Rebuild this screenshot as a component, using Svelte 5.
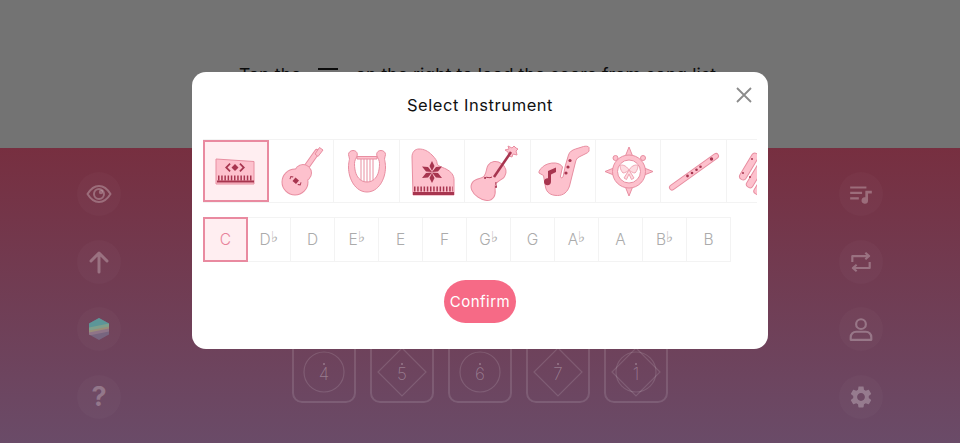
<script>
  const keys = [
    { n: 'C' }, { n: 'D', flat: true }, { n: 'D' }, { n: 'E', flat: true }, { n: 'E' }, { n: 'F' },
    { n: 'G', flat: true }, { n: 'G' }, { n: 'A', flat: true }, { n: 'A' }, { n: 'B', flat: true }, { n: 'B' }
  ];
  const tiles = [
    { d: '4', circle: true },
    { d: '5', diamond: true },
    { d: '6', circle: true },
    { d: '7', diamond: true },
    { d: '1', circle: true, diamond: true }
  ];
  let selectedKey = 0;
</script>

<div class="page">
  <div class="top">
    <p>Tap the
      <svg class="inline-icon" viewBox="0 0 20 14"><path d="M0 1h20v2H0zM0 6h11v2H0zM0 11h8v2H0zM14 5h5v2h-3v5a2 2 0 1 1-2-2z" /></svg>
      on the right to load the score from song list</p>
  </div>

  <div class="bottom">
    <div class="side">
      <div class="round">
        <svg viewBox="0 0 26 26" class="line"><path d="M1.5 13C5 7.3 8.7 5 13 5s8 2.300 11.500 8C21 18.700 17.300 21 13 21S5 18.700 1.500 13z" /><circle cx="13" cy="13" r="5" /><circle cx="15" cy="11" r="1.200" /></svg>
      </div>
      <div class="round">
        <svg viewBox="0 0 26 26" class="line thick"><path d="M13 23V4M5 12l8-8 8 8" /></svg>
      </div>
      <div class="round">
        <svg viewBox="0 0 26 26">
          <defs><clipPath id="hex"><path d="M13 2l10 5.500v11L13 24 3 18.500v-11z" /></clipPath></defs>
          <g clip-path="url(#hex)">
            <rect width="26" height="26" fill="#77657f" />
            <path d="M0 0h26v9L0 14z" fill="#5c9698" />
            <path d="M0 12l26-5v4L0 16z" fill="#7f9f8c" />
            <path d="M0 15l26-5v3L0 18z" fill="#9b8e79" />
            <path d="M0 17l26-5v3L0 20z" fill="#8f7488" />
          </g>
        </svg>
      </div>
      <div class="round"><span class="help">?</span></div>
    </div>

    <div class="tiles">
      {#each tiles as t}
        <div class="tile">
          <svg viewBox="0 0 59 59">
            {#if t.diamond}<path class="shape" d="M30 7l24 24-24 24L6 31z" />{/if}
            {#if t.circle}<circle class="shape" cx="30" cy="31" r="20" />{/if}
            <circle class="dot" cx="30" cy="23" r="1" />
            <text x="30" y="39" text-anchor="middle">{t.d}</text>
          </svg>
        </div>
      {/each}
    </div>

    <div class="side">
      <div class="round">
        <svg viewBox="0 0 24 24" class="solid"><path d="M2 5h15v2H2zM2 10h11v2H2zM2 15h8v2H2zM16 9h6v2.500h-3.500V18a3 3 0 1 1-2.500-3z" /></svg>
      </div>
      <div class="round">
        <svg viewBox="0 0 24 24" class="line"><path d="M4 12V6.500h15M16 3.500L19.500 6.500 16 9.500M20 12v5.500H5M8 14.500L4.500 17.500 8 20.500" /></svg>
      </div>
      <div class="round">
        <svg viewBox="0 0 24 24" class="line"><circle cx="12" cy="7.500" r="4.500" /><path d="M2.500 22v-2.500a5 5 0 0 1 5-5h9a5 5 0 0 1 5 5V22z" /></svg>
      </div>
      <div class="round">
        <svg viewBox="0 0 24 24" class="solid"><path d="M19.140 12.940c.04-.3.06-.61.06-.94 0-.32-.02-.64-.07-.94l2.030-1.580c.18-.14.23-.41.12-.61l-1.920-3.320c-.12-.22-.37-.29-.59-.22l-2.390.96c-.5-.38-1.030-.7-1.620-.94l-.36-2.540c-.04-.24-.24-.41-.48-.41h-3.840c-.24 0-.43.17-.47.41l-.36 2.540c-.59.24-1.130.57-1.620.94l-2.390-.96c-.22-.08-.47 0-.59.22L2.740 8.870c-.12.21-.08.47.12.61l2.030 1.580c-.05.3-.09.63-.09.94s.02.64.07.94l-2.030 1.580c-.18.14-.23.41-.12.61l1.920 3.320c.12.22.37.29.59.22l2.390-.96c.5.38 1.030.7 1.620.94l.36 2.540c.05.24.24.41.48.41h3.840c.24 0 .44-.17.47-.41l.36-2.540c.59-.24 1.130-.56 1.620-.94l2.390.96c.22.08.47 0 .59-.22l1.920-3.320c.12-.22.07-.47-.12-.61l-2.010-1.580zM12 15.600c-1.980 0-3.600-1.620-3.600-3.600s1.620-3.600 3.600-3.600 3.600 1.620 3.600 3.600-1.620 3.600-3.600 3.600z" /></svg>
      </div>
    </div>
  </div>

  <div class="mask">
    <div class="modal">
      <header>
        <h2>Select Instrument</h2>
        <button class="close" aria-label="Close">
          <svg viewBox="0 0 16 16"><path d="M1 1l14 14M15 1L1 15" /></svg>
        </button>
      </header>

      <div class="instruments">
        <!-- keyboard -->
        <div class="inst selected">
          <svg viewBox="0 0 64 64">
            <path class="f" d="M13 20l38 2.500V45H13z" />
            <path class="d" d="M32 25l3.500 3.500-3.500 3.500-3.500-3.500zM26.500 24l1.200 1.200-3.200 3.300 3.200 3.300-1.200 1.200-4.500-4.500zM37.500 24l4.500 4.500-4.500 4.500-1.200-1.200 3.200-3.300-3.200-3.300z" />
            <line class="k" x1="15" y1="39" x2="50" y2="39" />
            <rect class="d" x="14" y="41.500" width="37" height="2" />
          </svg>
        </div>
        <!-- guitar -->
        <div class="inst">
          <svg viewBox="0 0 64 64">
            <path class="tube" d="M36 30L48 13" />
            <path class="tube-in" d="M36 30L48 13" />
            <path class="f" d="M46 15l4.500-6.500 3.500 2.500-5 6.500z" />
            <g class="o"><circle cx="26" cy="43" r="12.500" /><circle cx="34" cy="34" r="8" /></g>
            <g class="i"><circle cx="26" cy="43" r="12.500" /><circle cx="34" cy="34" r="8" /></g>
            <path class="d" d="M26.500 38.500l3.500 3-3 3.500-3.500-3zM21.500 37l3 .5-.5 1-2-.3-.5 2-1-.2zM31.500 46.500l-3-.5.5-1 2 .3.500-2 1 .2z" />
          </svg>
        </div>
        <!-- lyre -->
        <div class="inst">
          <svg viewBox="0 0 64 64">
            <path class="s" d="M27 19v23M30 19v24M33 19v24M36 19v24M39 19v23" />
            <path class="f" d="M19 11.500c3.500 0 5 3 4 5.500-1 3-2.500 4-2.500 7.500 0 8 2 13 5.500 16 2 1.700 4 2.500 7 2.500s5-.8 7-2.500c3.500-3 5.500-8 5.500-16 0-3.500-1.500-4.500-2.500-7.500-1-2.500.5-5.500 4-5.500 2.500 0 4.500 1.800 4.500 4 0 1.500-1 3-1 4.500 0 .5 1 4 1 8 0 12-7 25-18.500 25S14.500 40 14.500 28c0-4 1-7.500 1-8 0-1.500-1-3-1-4.500 0-2.200 2-4 4.500-4z" />
            <path class="f" d="M23 17.500h20v2.500H23z" />
          </svg>
        </div>
        <!-- grand piano -->
        <div class="inst">
          <svg viewBox="0 0 64 64">
            <path class="f" d="M12 18c0-5 3-8 7-8 5 0 9 2 13 6 3.500 3.500 5 6 5 8 0 3 5 4 9 6 5 2.500 8 6 8 11v15H13z" />
            <path class="d" d="M32 22l2.500 5-2.500 5-2.500-5zM32 44l-2.500-5 2.500-5 2.500 5zM22 27.500l6 .5 4 5-6-.5zM42 27.500l-6 .5-4 5 6-.5zM22 39l6-.5 4-5-6 .5zM42 39l-6-.5-4-5 6 .5z" />
            <line class="k" x1="14" y1="50" x2="53" y2="50" />
            <rect class="d" x="13" y="53" width="41" height="3" />
          </svg>
        </div>
        <!-- violin -->
        <div class="inst">
          <svg viewBox="0 0 64 64">
            <path class="f" d="M40 11l4-1-1-3 4 2 2-2 2 2 2 1-2 2 1 4-4-1-1 3-3-1-1-4z" />
            <g transform="translate(25 41) rotate(35)">
              <path class="f" d="M0-20C6-20 10-16 10-11 10-7 7-5 7 0 7 4 13 6 13 12 13 18 7 21 0 21-7 21-13 18-13 12-13 6-7 4-7 0-7-5-10-7-10-11-10-16-6-20 0-20z" />
            </g>
            <path class="st" d="M46 13L29 38" />
            <path class="sd" d="M20 39c2-2 4 1 7-1M31 43c-1 2 1 3 0 5" />
            <circle class="d" cx="20" cy="39" r="1" /><circle class="d" cx="31" cy="48" r="1" />
          </svg>
        </div>
        <!-- saxophone -->
        <div class="inst">
          <svg viewBox="0 0 64 64">
            <path class="f" d="M58 10.500c.5 2-1 3-3 4l-7 3.500c-2 1-3 3-3.500 5l-6 24c-2 6-6 9.500-12 9.500-7 0-11-3-12-8.500l-2-11.500-4.500-2.500c-.5-2 1.500-4 3.500-6 2.500-2.500 8-4.500 13-4 3.500.5 6 2 7 4l-2 9c-.5 2 1 2.500 2.500 1l2.500-12 3-10c1-3.500 4-5 7-6l8-2.500c2-.5 5-.5 5.500 1z" />
            <circle class="d" cx="39" cy="21.500" r="1.600" /><circle class="d" cx="37" cy="28" r="1.600" /><circle class="d" cx="35" cy="34" r="1.600" />
            <path class="d" d="M17 32l8-3.500V33l-5 2.500V42.500a3.500 3.500 0 1 1-3-3.200z" />
          </svg>
        </div>
        <!-- compass -->
        <div class="inst">
          <svg viewBox="0 0 64 64">
            <circle class="f" cx="19.500" cy="19" r="2.500" /><circle class="f" cx="47" cy="19" r="2.500" />
            <path class="f" d="M33 8l4 10h-8zM33 57l4-10h-8zM9 32.500l10-4v8zM57 32.500l-10-4v8z" />
            <circle class="f" cx="33" cy="32.500" r="16.500" />
            <circle class="w" cx="33" cy="32.500" r="11.500" />
            <path class="b" d="M33 31c-3-5-8-6-9-4 0 3 2 6 3 7 2 0 5-2 6-3zM33 31c3-5 8-6 9-4 0 3-2 6-3 7-2 0-5-2-6-3zM33 31l-5 8 2.500 1.500L33 35l2.500 5.500L38 39z" />
          </svg>
        </div>
        <!-- flute -->
        <div class="inst">
          <svg viewBox="0 0 64 64">
            <path class="tube" d="M11 48.500L55 17" />
            <path class="tube-in" d="M11 48.500L55 17" />
            <circle class="d" cx="26.500" cy="37" r="1.400" /><circle class="d" cx="31" cy="34" r="1.300" /><circle class="d" cx="35.500" cy="30.800" r="1.300" /><circle class="d" cx="39.500" cy="27.800" r="1.300" /><circle class="d" cx="50.500" cy="20" r="1.700" />
          </svg>
        </div>
        <!-- xylophone -->
        <div class="inst">
          <svg viewBox="0 0 64 64">
            <rect class="f" x="20" y="36" width="36" height="7" rx="3" transform="rotate(-59 38 39.500)" />
            <rect class="f" x="13" y="30" width="34" height="7" rx="3" transform="rotate(-59 30 33.500)" />
            <rect class="f" x="7" y="24" width="30" height="7" rx="3.500" transform="rotate(-59 22 27.500)" />
            <circle class="d" cx="25" cy="20" r="1" /><circle class="d" cx="16" cy="34" r="1" /><circle class="d" cx="23" cy="38" r="1" /><circle class="d" cx="31" cy="43" r="1" />
          </svg>
        </div>
      </div>

      <div class="keys">
        {#each keys as k, i}
          <div class="key" class:selected={i === selectedKey}>{k.n}{#if k.flat}<span class="flat">♭</span>{/if}</div>
        {/each}
      </div>

      <button class="confirm">Confirm</button>
    </div>
  </div>
</div>

<style>
  :global(body) {
    margin: 0;
    background: #737373;
    font-family: Inter, "Liberation Sans", sans-serif;
  }

  .page {
    position: relative;
    width: 960px;
    height: 443px;
    display: flex;
    flex-direction: column;
    overflow: hidden;
  }

  .top {
    height: 148px;
    flex: none;
    display: flex;
    align-items: center;
    justify-content: center;
    background: #737373;
    color: #0c0c0c;
  }
  .top p {
    margin: 0;
    font-size: 17.500px;
    letter-spacing: 0.1px;
    display: flex;
    align-items: center;
    gap: 17px;
    margin-right: 5px;
  }
  .inline-icon { width: 20px; height: 14px; fill: #0c0c0c; }

  .bottom {
    flex: 1;
    display: flex;
    justify-content: space-between;
    padding: 24px 77px 0;
    background: linear-gradient(#772f40, #6a4b68);
  }
  .side {
    display: flex;
    flex-direction: column;
    gap: 23.5px;
  }
  .round {
    width: 44px;
    height: 44px;
    border-radius: 50%;
    background: rgba(255, 255, 255, 0.025);
    display: flex;
    align-items: center;
    justify-content: center;
  }
  .round svg { width: 26px; height: 26px; }
  .line {
    fill: none;
    stroke: rgba(255, 255, 255, 0.27);
    stroke-width: 2;
    stroke-linejoin: round;
  }
  .line.thick { stroke-width: 3; stroke-linecap: round; }
  .solid { fill: rgba(255, 255, 255, 0.27); }
  .help {
    color: rgba(255, 255, 255, 0.25);
    font-size: 27px;
    font-weight: 700;
    line-height: 1;
  }

  .tiles {
    align-self: flex-end;
    display: flex;
    gap: 14px;
    margin-bottom: 40px;
  }
  .tile {
    width: 64px;
    height: 64px;
    box-sizing: border-box;
    border: 2.500px solid rgba(255, 255, 255, 0.12);
    border-radius: 10px;
  }
  .tile svg { display: block; width: 59px; height: 59px; }
  .shape { fill: none; stroke: rgba(255, 255, 255, 0.13); stroke-width: 1.200; }
  .dot { fill: rgba(255, 255, 255, 0.28); }
  .tile text {
    font-size: 17px;
    font-weight: 200;
    fill: rgba(255, 255, 255, 0.3);
  }

  .mask {
    position: absolute;
    inset: 0;
    display: flex;
    justify-content: center;
    padding-top: 72px;
  }
  .modal {
    position: relative;
    width: 576px;
    height: 277px;
    box-sizing: border-box;
    padding: 0 11px;
    background: #fff;
    border-radius: 14px;
    display: flex;
    flex-direction: column;
  }
  header {
    height: 67px;
    flex: none;
    display: flex;
    justify-content: center;
    padding-top: 23px;
    box-sizing: border-box;
  }
  h2 {
    margin: 0;
    font-size: 16.500px;
    line-height: 21px;
    font-weight: 400;
    color: #111;
    letter-spacing: 0.55px;
  }
  .close {
    position: absolute;
    top: 15px;
    right: 16px;
    width: 16px;
    height: 16px;
    padding: 0;
    border: 0;
    background: none;
  }
  .close svg {
    display: block;
    width: 16px;
    height: 16px;
    fill: none;
    stroke: #8b8b8b;
    stroke-width: 1.800;
  }

  .instruments {
    display: flex;
    height: 64px;
    flex: none;
    overflow: hidden;
    border-top: 1px solid #f3f3f3;
    border-bottom: 1px solid #f3f3f3;
    box-sizing: border-box;
  }
  .inst {
    flex: 0 0 65.400px;
    box-sizing: border-box;
    border-right: 1px solid #f3f3f3;
  }
  .inst svg { display: block; width: 64px; height: 64px; margin-top: -1px; }
  .inst.selected {
    flex-basis: 66px;
    background: #ffeef1;
    outline: 2px solid #e98aa0;
    outline-offset: -2px;
  }

  .f { fill: #fdc1cd; stroke: #e88ea1; stroke-width: 1; stroke-linejoin: round; }
  .d { fill: #a7354f; }
  .w { fill: #fff; stroke: #e88ea1; stroke-width: 1; }
  .b { fill: #fddbe1; stroke: #f0a5b4; stroke-width: 1; stroke-linejoin: round; }
  .o { fill: #e88ea1; stroke: #e88ea1; stroke-width: 2; }
  .i { fill: #fdc1cd; }
  .k { stroke: #a7354f; stroke-width: 5; stroke-dasharray: 1.500 1.700; }
  .s { stroke: #e88ea1; stroke-width: 1; fill: none; }
  .st { stroke: #a7354f; stroke-width: 2.500; fill: none; }
  .sd { stroke: #a7354f; stroke-width: 1; fill: none; }
  .tube { stroke: #e88ea1; stroke-width: 6; stroke-linecap: round; fill: none; }
  .tube-in { stroke: #fdc1cd; stroke-width: 4; stroke-linecap: round; fill: none; }

  .keys {
    display: flex;
    flex: none;
    height: 45px;
    margin-top: 14px;
  }
  .key {
    width: 44px;
    box-sizing: border-box;
    border: 1px solid #f3f3f3;
    border-left: 0;
    display: flex;
    align-items: center;
    justify-content: center;
    font-size: 15.500px;
    font-weight: 300;
    color: #ababab;
  }
  .key.selected {
    width: 45px;
    margin-right: -1px;
    border: 2px solid #e98aa0;
    background: #ffeef1;
    color: #e8829a;
    position: relative;
  }
  .flat {
    font-family: "DejaVu Sans", sans-serif;
    font-size: 15px;
    margin-top: -5px;
  }

  .confirm {
    align-self: center;
    width: 72px;
    height: 43px;
    margin-top: 18px;
    padding: 0;
    border: 0;
    border-radius: 22px;
    background: #f66a86;
    color: #fff;
    font-family: inherit;
    font-size: 15px;
    letter-spacing: 0.5px;
  }
</style>
